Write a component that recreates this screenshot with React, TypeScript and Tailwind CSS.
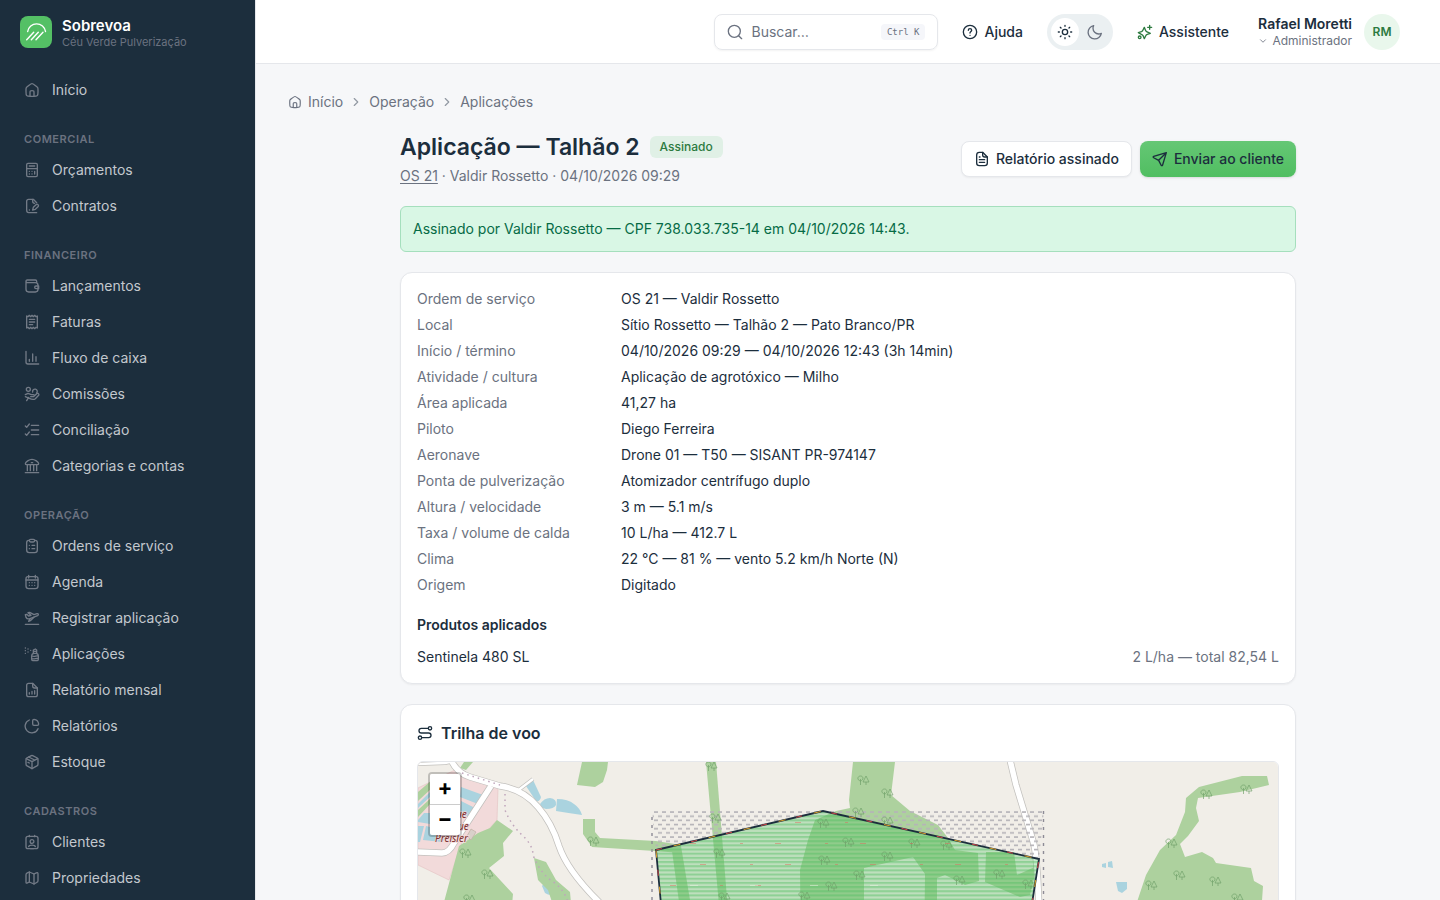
import type { ReactNode } from "react";

const ICONS: Record<string, string[]> = {
  home: [
    "M3 12v2.5c0 3.3 0 4.95 1.03 5.98C5.05 21.5 6.7 21.5 10 21.5h4c3.3 0 4.95 0 5.97-1.02C21 19.45 21 17.8 21 14.5V12c0-1.7 0-2.53-.36-3.26-.35-.73-1.01-1.24-2.34-2.28l-2-1.55C14.24 3.3 13.2 2.5 12 2.5s-2.24.8-4.3 2.41l-2 1.55C4.37 7.5 3.71 8.01 3.36 8.74 3 9.47 3 10.3 3 12Z",
    "M15 21v-5c0-1.4 0-2.1-.44-2.56C14.1 13 13.4 13 12 13s-2.1 0-2.56.44C9 13.9 9 14.6 9 16v5",
  ],
  calculator: [
    "M6 2h12c1.500 0 2 .5 2 2v16c0 1.500-.5 2-2 2H6c-1.500 0-2-.5-2-2V4c0-1.500.5-2 2-2Z",
    "M8 6h8M4 10h16M8 14h.1M12 14h.1M16 14v4M8 18h.1M12 18h.1",
  ],
  contract: [
    "M19 7 14 2H7C4.500 2 4 2.500 4 5v13c0 3 .5 4 3 4h12",
    "M13 2v3c0 2 1 3 3 3M8 18h.1",
    "m13 18 1-4 4-4c1-1 2-1 3 0s1 2 0 3l-4 4-4 1Z",
  ],
  wallet: [
    "M3 5v12c0 3 1 4 4 4h10c3 0 4-1 4-4v-6c0-3-1-4-4-4H5C3.600 7 3 6.200 3 5c0-1.300.8-2 2-2h12c1.500 0 2 .7 2 2v2",
    "M22 12h-4c-1.500 0-2 .8-2 2s.5 2 2 2h4v-4Z",
  ],
  receipt: [
    "M4 3l2 1 2-2 2 2 2-2 2 2 2-2 2 2 2-1v18l-2-1-2 2-2-2-2 2-2-2-2 2-2-2-2 1V3Z",
    "M8 8h8M8 12h8M8 16h5",
  ],
  chart: ["M3 2v16c0 2.500.5 3 3 3h16M8 17v-3M13 17V6M18 17v-7"],
  commission: [
    "M6.500 8a3 3 0 1 0 0-6 3 3 0 0 0 0 6ZM13 9a3.500 3.500 0 1 1 6 1.500",
    "M2 13l4-2 5 2h3c1.500 0 2 2 .5 3H10l5-.5 4-4c2-1.500 4 .5 3 2.500l-5 5c-2 1.500-6 1-9-.5L2 16M7 17l-3 5",
  ],
  checklist: ["M11 5h11M11 12h11M11 19h11M2 6l2 2 4-5M2 18l2 2 4-5"],
  bank: [
    "M2 8.500C2 6 8 2 12 2s10 4 10 6.500c0 1-1 1.500-2 1.500H4c-1 0-2-.5-2-1.500ZM11 7h2",
    "M5 10v9M9.500 10v9M14.500 10v9M19 10v9M2 22h20",
  ],
  clipboard: [
    "M8 3.500H7C5 3.500 4 4.500 4 7v11c0 3 1 4 4 4h8c3 0 4-1 4-4V7c0-2.500-1-3.500-3-3.500h-1",
    "M10 2h4c1.500 0 2 .5 2 1.800S15.500 6 14 6h-4c-1.500 0-2-.8-2-2.200S8.500 2 10 2ZM8 11h.1M12 11h4M8 16h.1M12 16h4",
  ],
  calendar: [
    "M6 4h12c2.500 0 3 .8 3 3v11c0 3-.8 4-4 4H7c-3.200 0-4-1-4-4V7c0-2.200.5-3 3-3Z",
    "M7 2v4M17 2v4M3 9h18M8 13h.1M12 13h.1M16 13h.1M8 17h.1M12 17h.1M16 17h.1",
  ],
  plane: [
    "M3 11 2 7l2-.5L7 9l3.500-1L6 4l2.500-.5L15 7l4.500-1.500c2-.5 3 2 .8 3L9 13c-3 1-4.500.8-6-2Z",
    "M9 13l-2 4 2.500-1 5.500-5M2 21.500h20",
  ],
  spray: [
    "M13 22h7c1 0 1.500-.5 1.500-2v-5c0-3-1.500-4-4-4h-2c-2.500 0-4 1-4 4v5c0 1.500.5 2 1.500 2ZM14 11V8h5v3M14 8V6l3-1.500L19 6v2M12 15c4 2 6-1 9 0M12 19c4 1 6-1 9 0",
    "M2 3h.1M6 4.500h.1M2 7h.1M6 9h.1M2 11h.1M10 6.500h.1",
  ],
  reportChart: [
    "M13 2H7C4.500 2 4 3 4 5v14c0 2 .8 3 3 3h10c2.200 0 3-1 3-3V9l-7-7Z",
    "M13 2v4c0 2 1 3 3 3h4M8 18v-2M12 18v-4M16 18v-5",
  ],
  pie: [
    "M8 3a10 10 0 1 0 13 13",
    "M22 9c-.5-4-3-6.500-7-7-1.300 0-2 .5-2 2v5c0 1.500.5 2 2 2h5c1.500 0 2-.7 2-2Z",
  ],
  box: [
    "M12 22l-8-4.500c-1-.6-1-1-1-3V8.500c0-1.500 0-2 1-2.500l7-3.500c.8-.4 1.200-.4 2 0L20 6c1 .5 1 1 1 2.500v6c0 2 0 2.400-1 3L12 22Z",
    "M3.500 7 12 11.500 20.500 7M12 12v10M7 4.500l9 4.500M6 12.500l2 1",
  ],
  contact: [
    "M6 3.500h12c2.500 0 3 .5 3 3V19c0 2.500-.5 3-3 3H6c-2.500 0-3-.5-3-3V6.500c0-2.500.5-3 3-3Z",
    "M8 2v2M16 2v2M12 14a2.800 2.800 0 1 0 0-5.600A2.800 2.800 0 0 0 12 14ZM7 19c.5-3 9.500-3 10 0M10 22h4",
  ],
  map: [
    "M3 7c0-1.500.5-2 2-2.700L8 3l7 3 3.500-1.700C20.500 3.500 21 4 21 6v10c0 1.500-.5 2-2 2.700L15 21l-7-3-3.500 1.700C3.300 20 3 19.500 3 18V7Z",
    "M8 3v15M15 6v15",
  ],
  search: ["M17.500 17.500 22 22", "M20 11a9 9 0 1 1-18 0 9 9 0 0 1 18 0Z"],
  help: [
    "M22 12a10 10 0 1 1-20 0 10 10 0 0 1 20 0Z",
    "M9.500 9.500C9.500 8 10.600 7 12 7s2.500 1 2.500 2.400c0 1.800-2.500 2-2.500 4.100M12 17h.1",
  ],
  sun: [
    "M16 12a4 4 0 1 1-8 0 4 4 0 0 1 8 0Z",
    "M12 2v1.500M12 20.500V22M2 12h1.500M20.500 12H22M5 5l1 1M18 18l1 1M19 5l-1 1M6 18l-1 1",
  ],
  moon: ["M21.500 14.100A9 9 0 0 1 17.500 15 8.500 8.500 0 0 1 9 6.500c0-1.500.4-2.900 1-4A10 10 0 1 0 21.500 14.100Z"],
  sparkles: [
    "M11 5l1.400 3.600c.6 1.500.9 2 2 2.900L20 14l-4.600 1.500c-1.500.6-2 1.200-2.500 2.500L11 22l-1.900-4.500c-.6-1.200-1-1.500-2.500-2L2 13l4.700-1.500c1.300-.5 1.800-1 2.300-2.400L11 5Z",
    "M19 2v6M16 5h6M6 20a2 2 0 1 1-4 0 2 2 0 0 1 4 0Z",
  ],
  file: [
    "M13 2H8C5 2 4 3 4 6v12c0 3 1 4 4 4h8c3 0 4-1 4-4V9l-7-7Z",
    "M13 2v4c0 2 1 3 3 3h4M8 9h1M8 13h8M8 17h8",
  ],
  send: ["M21.500 2.500 2.500 8c-1 .4-1 1.600 0 2.100L10 14l3.700 7.300c.5 1 1.700 1 2.100 0l5.700-18.800ZM21 3 10 14"],
  route: [
    "M22 5a2.500 2.500 0 1 1-5 0 2.500 2.500 0 0 1 5 0ZM7 19a2.500 2.500 0 1 1-5 0 2.500 2.500 0 0 1 5 0Z",
    "M17 5H6.500c-4.700 0-4.700 7 0 7h11c4.700 0 4.700 7 0 7H7M11 12h2",
  ],
  right: ["m9 6 6 6-6 6"],
  down: ["m6 9 6 6 6-6"],
};

function Icon({ name, className = "size-4" }: { name: string; className?: string }) {
  return (
    <svg viewBox="0 0 24 24" className={`shrink-0 ${className}`} fill="none" stroke="currentColor" strokeWidth="2" strokeLinecap="round" strokeLinejoin="round" aria-hidden="true">
      {ICONS[name].map((d) => (
        <path key={d} d={d} />
      ))}
    </svg>
  );
}

const SECTIONS: { title: string; items: [string, string][] }[] = [
  { title: "Comercial", items: [["calculator", "Orçamentos"], ["contract", "Contratos"]] },
  {
    title: "Financeiro",
    items: [
      ["wallet", "Lançamentos"],
      ["receipt", "Faturas"],
      ["chart", "Fluxo de caixa"],
      ["commission", "Comissões"],
      ["checklist", "Conciliação"],
      ["bank", "Categorias e contas"],
    ],
  },
  {
    title: "Operação",
    items: [
      ["clipboard", "Ordens de serviço"],
      ["calendar", "Agenda"],
      ["plane", "Registrar aplicação"],
      ["spray", "Aplicações"],
      ["reportChart", "Relatório mensal"],
      ["pie", "Relatórios"],
      ["box", "Estoque"],
    ],
  },
  { title: "Cadastros", items: [["contact", "Clientes"], ["map", "Propriedades"]] },
];

function NavItem({ icon, children }: { icon: string; children: ReactNode }) {
  return (
    <a href="#" className="flex h-9 items-center gap-3 rounded-lg px-3 text-sm text-[#c3c8ce]">
      <span className="text-[#737b87]">
        <Icon name={icon} />
      </span>
      {children}
    </a>
  );
}

function Sidebar() {
  return (
    <aside className="flex w-64 shrink-0 flex-col overflow-hidden border-r border-gray-200 bg-[#1c2e3d]">
      <div className="flex h-16 shrink-0 items-center gap-2.5 px-5">
        <svg viewBox="0 0 32 32" className="size-8 rounded-lg bg-[#54c065]" fill="none" stroke="white" strokeWidth="1.400" strokeLinecap="round" aria-hidden="true">
          <path d="M7.700 15.500A9 9 0 0 1 25.500 15.500" />
          <path d="m6.700 23.800 7-7.600M11.300 23.800l7-7.600M16 23.800l7-7.600" />
        </svg>
        <div>
          <div className="text-[15px] leading-5 font-semibold text-white">Sobrevoa</div>
          <div className="text-[11px] leading-3 text-[#6b7280]">Céu Verde Pulverização</div>
        </div>
      </div>
      <nav className="px-3 pt-2" aria-label="Principal">
        <NavItem icon="home">Início</NavItem>
        {SECTIONS.map((s) => (
          <section key={s.title}>
            <h2 className="mt-[22px] mb-1 px-3 text-[11px] leading-[18px] font-semibold tracking-wider text-[#6b7280] uppercase">{s.title}</h2>
            {s.items.map(([icon, label]) => (
              <NavItem key={label} icon={icon}>
                {label}
              </NavItem>
            ))}
          </section>
        ))}
      </nav>
    </aside>
  );
}

function Header() {
  return (
    <header className="flex h-16 shrink-0 items-center justify-end gap-6 border-b border-gray-200 bg-white px-10">
      <label className="flex h-9 w-56 items-center gap-2 rounded-lg border border-gray-200 px-3 text-[#6b7280] shadow-xs">
        <Icon name="search" />
        <input type="text" aria-label="Buscar" placeholder="Buscar…" className="min-w-0 flex-1 text-sm outline-none placeholder:text-[#6b7280]" />
        <kbd className="rounded bg-[#f5f6fa] px-1.5 font-['DejaVu_Sans_Mono',monospace] text-[9px] leading-4">Ctrl K</kbd>
      </label>
      <button type="button" className="flex items-center gap-1.5 text-sm font-medium">
        <Icon name="help" />
        Ajuda
      </button>
      <div className="flex gap-0.5 rounded-full bg-[#ebf0f2] p-1">
        <button type="button" aria-label="Tema claro" className="grid size-7 place-items-center rounded-full bg-white">
          <Icon name="sun" />
        </button>
        <button type="button" aria-label="Tema escuro" className="grid size-7 place-items-center rounded-full text-[#6b7280]">
          <Icon name="moon" />
        </button>
      </div>
      <button type="button" className="flex items-center gap-1.5 text-sm font-medium">
        <span className="text-[#2c7a3f]">
          <Icon name="sparkles" />
        </span>
        Assistente
      </button>
      <button type="button" className="flex items-center gap-3 pl-[5px]">
        <span className="flex flex-col items-end">
          <span className="text-sm leading-[18px] font-semibold">Rafael Moretti</span>
          <span className="flex w-full items-center justify-between text-xs text-[#6b7280]">
            <Icon name="down" className="size-2.5" />
            Administrador
          </span>
        </span>
        <span className="grid size-9 place-items-center rounded-full bg-[#e9f7ec] text-xs font-semibold text-[#2c7a3f]">RM</span>
      </button>
    </header>
  );
}

const DETAILS: [string, string][] = [
  ["Ordem de serviço", "OS 21 — Valdir Rossetto"],
  ["Local", "Sítio Rossetto — Talhão 2 — Pato Branco/PR"],
  ["Início / término", "04/10/2026 09:29 — 04/10/2026 12:43 (3h 14min)"],
  ["Atividade / cultura", "Aplicação de agrotóxico — Milho"],
  ["Área aplicada", "41,27 ha"],
  ["Piloto", "Diego Ferreira"],
  ["Aeronave", "Drone 01 — T50 — SISANT PR-974147"],
  ["Ponta de pulverização", "Atomizador centrífugo duplo"],
  ["Altura / velocidade", "3 m — 5.1 m/s"],
  ["Taxa / volume de calda", "10 L/ha — 412.7 L"],
  ["Clima", "22 °C — 81 % — vento 5.2 km/h Norte (N)"],
  ["Origem", "Digitado"],
];

const WOODS = [
  "582,762 608,762 607,770 603,782 595,787 577,785",
  "583,819 595,819 595,832 600,838 656,841 681,845 681,853 655,851 592,847 583,834",
  "459,846 478,833 490,828 497,820 513,831 503,843 504,856 489,868 513,894 507,960 430,960 444,902",
  "534,858 546,862 556,880 570,892 576,960 552,902 548,890 538,880",
  "706,762 716,762 732,960 724,960",
  "672,851 681,846 700,960 687,960",
  "853,762 895,762 891,795 910,811 938,825 948,838 955,850 978,853 979,881 965,885 945,875 937,878 937,960 924,960 925,874 913,857 864,868 864,960 801,960 800,870 808,840 815,820 836,811 850,808 849,800",
  "986,852 1014,852 1017,875 1037,866 1030,895 1020,897 985,882",
  "1267,776 1269,785 1240,792 1198,798 1196,808 1199,821 1188,836 1180,844 1185,857 1202,852 1213,858 1216,863 1251,868 1254,881 1263,886 1258,960 1120,960 1137,902 1146,875 1160,850 1176,835 1185,812 1186,798 1199,787 1242,776",
  "418,792 432,780 432,788 418,801",
  "418,810 432,797 432,802 418,817",
  "464,762 473,762 466,770 460,768",
];

const WATER = [
  "M461 787 483 795 478 804 460 797Z",
  "M461 801 475 808 466 818 460 815Z",
  "M418 820 424 813H432L430 824 418 822Z",
  "M418 826H424L420 842H418Z",
  "M426 826 452 832 442 842 423 840Z",
  "M418 804 432 790V795L418 808Z",
  "M526 786 533 780 541 797Q540 802 536 801Z",
  "M540 804Q544 798 550 798 557 799 556 805 554 809 546 809 541 808 540 804Z",
  "M557 799Q568 799 574 804 580 808 582 815 568 813 556 811Z",
  "M542 886Q545 881 552 882 557 886 556 893 551 897 545 893Z",
  "M1102 864 1106 863V868L1102 867Z",
  "M1108 862 1112 861 1113 868 1108 867Z",
  "M1116 882H1127V889L1122 893 1118 891Z",
];

const TREES = [
  [465, 853], [487, 874], [469, 899], [593, 841], [711, 766], [715, 818], [863, 780], [887, 793],
  [858, 812], [887, 821], [823, 823], [848, 842], [914, 843], [887, 856], [824, 860], [946, 845],
  [719, 853], [831, 886], [859, 875], [959, 880], [999, 874], [1028, 884], [804, 896], [724, 897],
  [1206, 794], [1246, 789], [1171, 843], [1151, 885], [1179, 875], [1215, 881], [1237, 898],
];

const FIELD = "656,850 823,811 1039,859 1020,980 668,980";

function FlightMap() {
  return (
    <svg viewBox="418 762 860 198" preserveAspectRatio="xMidYMin slice" className="block h-auto w-full" role="img" aria-label="Mapa da trilha de voo">
      <defs>
        <pattern id="passes" x="652" y="811" width="8" height="4.170" patternUnits="userSpaceOnUse">
          <path d="M0 1h8" stroke="#54c065" strokeOpacity="0.450" strokeWidth="2" />
        </pattern>
        <pattern id="dashes" x="654" y="811" width="8" height="8.340" patternUnits="userSpaceOnUse">
          <path d="M0 1h4M4 5.170h4" stroke="#b5b3b8" strokeWidth="1.700" />
        </pattern>
        <clipPath id="field">
          <polygon points={FIELD} />
        </clipPath>
      </defs>
      <rect x="418" y="762" width="860" height="198" fill="#f1eee8" />
      <polygon points="418,788 455,770 498,788 497,820 488,830 462,842 449,880 418,865" fill="#f2dada" stroke="#e5c5c5" strokeWidth="0.700" />
      <g fill="#aad3df">
        {WATER.map((d) => (
          <path key={d} d={d} />
        ))}
      </g>
      <g fill="#add19e">
        {WOODS.map((p) => (
          <polygon key={p} points={p} />
        ))}
      </g>
      <path d="m467 836 4-7 5 3-5 8Z" fill="#d9d0c9" stroke="#c0b0a5" strokeWidth="0.700" />
      <g fill="none" strokeLinejoin="round">
        {[
          ["#c2c0bd", 7, 4],
          ["#ffffff", 5.5, 2.5],
        ].map(([color, wide, thin]) => (
          <g key={color} stroke={color as string}>
            <path strokeWidth={wide} d="M451 760Q457 773 470 777L500 786Q523 789 538 807Q552 823 559 846Q567 870 598 901L640 945" />
            <path strokeWidth={wide} d="M491 786 454 843Q449 853 442 853L416 852" />
            <path strokeWidth={wide} d="M1010 760 1016 785 1033 841Q1039 860 1040 960" />
            <path strokeWidth={thin} d="M516 792 533 779M416 764 445 763 454 761" />
          </g>
        ))}
        <path d="M462 773 500 785M505 794V810Q511 825 522 835T533 855Q540 873 552 881T568 902" stroke="#bfa5bb" strokeDasharray="1.500 4" strokeWidth="1.500" />
      </g>
      <path fill="url(#dashes)" d="M652 811H823L656 850ZM823 811H1044L1039 859Z" />
      <path d="M652 817V960M1043.500 811V960" stroke="#8d8b96" strokeWidth="1.400" strokeDasharray="3 5" />
      <polygon points={FIELD} fill="#54c065" fillOpacity="0.320" />
      <polygon points={FIELD} fill="url(#passes)" />
      <g fill="none" stroke="#6f9f69" strokeOpacity="0.750" strokeWidth="0.900">
        {TREES.map(([x, y]) => (
          <path key={`${x}-${y}`} transform={`translate(${x} ${y})`} d="M-2.500 5V-1M-2.500 1C-6.500 0-5.500-4-2.500-4S1 0-2.500 1ZM3 5V2M0 2 3-4 6 2Z" />
        ))}
      </g>
      <g fill="#7b3030" fontFamily="'Noto Sans', sans-serif" fontStyle="italic" fontSize="10" stroke="#f2dada" strokeWidth="1.500" paintOrder="stroke">
        <text x="456" y="818">ue</text>
        <text x="458" y="830">ue</text>
        <text x="435" y="842">Preisler</text>
      </g>
      <g clipPath="url(#field)" fill="none" strokeWidth="0.700" strokeOpacity="0.700">
        <path d="M795 822.500H850M690 843.500H950M700 864.500H1030M670 885.500H800" stroke="#dc6a5b" strokeDasharray="6 44 3 32" />
        <path d="M690 885.500H920" stroke="#e8f3e2" strokeDasharray="8 52" />
      </g>
      <polygon points={FIELD} fill="none" stroke="#1c2e3d" strokeWidth="1.800" />
      <polygon points={FIELD} fill="none" stroke="#d24848" strokeWidth="1" strokeDasharray="6 30" />
      <polygon points={FIELD} fill="none" stroke="#d9a02d" strokeWidth="1" strokeDasharray="7 29" strokeDashoffset="-18" />
    </svg>
  );
}

function Card({ children }: { children: ReactNode }) {
  return <section className="rounded-xl border border-gray-200 bg-white p-4 shadow-xs">{children}</section>;
}

export default function App() {
  return (
    <div className="flex h-screen overflow-hidden bg-[#f6f7f9] font-['Inter',sans-serif] text-[#1c2e3d]">
      <Sidebar />
      <div className="flex min-w-0 flex-1 flex-col">
        <Header />
        <main className="flex-1 overflow-y-auto px-8 pt-7 pb-8 [scrollbar-width:none]">
          <nav className="flex items-center gap-1.5 text-sm text-[#6b7280]" aria-label="Trilha de navegação">
            <a href="#" className="flex items-center gap-1.5">
              <Icon name="home" className="size-3.5" />
              Início
            </a>
            <Icon name="right" className="size-3.5 text-[#9299a3]" />
            <a href="#">Operação</a>
            <Icon name="right" className="size-3.5 text-[#9299a3]" />
            <a href="#">Aplicações</a>
          </nav>

          <div className="mx-auto mt-5 flex max-w-4xl flex-col gap-5">
            <div className="flex items-center justify-between gap-4">
              <div>
                <div className="flex items-center gap-2.5">
                  <h1 className="text-[23px] leading-[30px] font-semibold">Aplicação — Talhão 2</h1>
                  <span className="rounded-md bg-[#e0f0e6] px-2.5 py-[3px] text-xs font-medium text-[#2c7a3f]">Assinado</span>
                </div>
                <p className="mt-1 text-sm text-[#6b7280]">
                  <a href="#" className="underline underline-offset-2">OS 21</a> · Valdir Rossetto · 04/10/2026 09:29
                </p>
              </div>
              <div className="flex gap-2">
                <button type="button" className="flex h-9 items-center gap-1.5 rounded-lg border border-gray-200 bg-white px-3 text-sm font-medium shadow-xs">
                  <Icon name="file" />
                  Relatório assinado
                </button>
                <button type="button" className="flex h-9 items-center gap-1.5 rounded-lg bg-linear-to-b from-[#65c775] to-[#50be61] px-3 text-sm font-medium shadow-sm">
                  <Icon name="send" />
                  Enviar ao cliente
                </button>
              </div>
            </div>

            <div role="status" className="rounded-md border border-[#a5dfbd] bg-[#d9f7e5] p-3 text-sm text-[#066b45]">
              Assinado por Valdir Rossetto — CPF 738.033.735-14 em 04/10/2026 14:43.
            </div>

            <Card>
              <dl className="grid grid-cols-[200px_1fr] gap-x-1 gap-y-1.5 text-sm">
                {DETAILS.map(([term, value]) => (
                  <div key={term} className="contents">
                    <dt className="text-[#6b7280]">{term}</dt>
                    <dd>{value}</dd>
                  </div>
                ))}
              </dl>
              <h2 className="mt-5 text-sm font-semibold">Produtos aplicados</h2>
              <div className="mt-3 flex justify-between text-sm">
                <span>Sentinela 480 SL</span>
                <span className="text-[#6b7280]">2 L/ha — total 82,54 L</span>
              </div>
            </Card>

            <Card>
              <h2 className="flex items-center gap-2 text-base font-semibold">
                <Icon name="route" />
                Trilha de voo
              </h2>
              <div className="relative mt-4 overflow-hidden rounded-md border border-gray-200">
                <FlightMap />
                <div className="absolute top-2.5 left-2.5 flex w-[34px] flex-col overflow-hidden rounded border-2 border-black/20 bg-clip-padding text-[22px] leading-[26px] font-bold text-black">
                  <button type="button" aria-label="Aproximar" className="h-[31px] border-b border-[#ccc] bg-white pb-1">+</button>
                  <button type="button" aria-label="Afastar" className="h-[30px] bg-white pb-1">−</button>
                </div>
              </div>
            </Card>
          </div>
        </main>
      </div>
    </div>
  );
}
